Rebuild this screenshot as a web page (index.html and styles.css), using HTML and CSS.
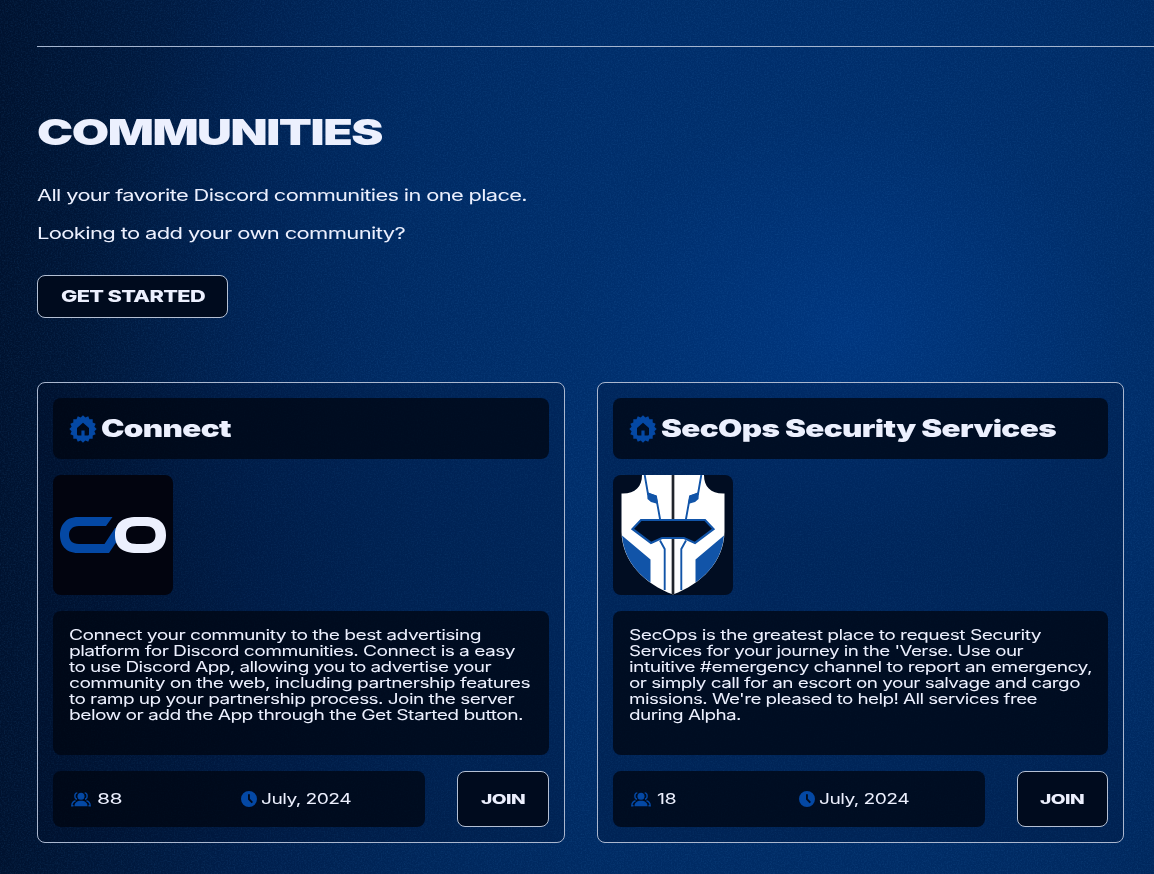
FILE: index.html
```html
<!DOCTYPE html>
<html lang="en">
<head>
<meta charset="utf-8">
<title>Communities</title>
<link rel="stylesheet" href="styles.css">
</head>
<body>
<svg class="defs" width="0" height="0" aria-hidden="true">
  <symbol id="home-badge" viewBox="0 0 28 28">
    <path fill-rule="evenodd" d="M14 .3 16.300 2.600 19.240 1.340 20.500 4.300 23.690 4.310 23.700 7.500 26.660 8.760 25.400 11.700 27.700 14 25.400 16.300 26.660 19.240 23.700 20.500 23.690 23.690 20.500 23.700 19.240 26.660 16.300 25.400 14 27.700 11.700 25.400 8.760 26.660 7.500 23.700 4.310 23.690 4.300 20.500 1.340 19.240 2.600 16.300 .3 14 2.600 11.700 1.340 8.760 4.300 7.500 4.310 4.310 7.500 4.300 8.760 1.340 11.700 2.600ZM14 7.700 8 13V19.300Q8 20.500 9.200 20.500H12.400V15.500H15.600V20.500H18.800Q20 20.500 20 19.300V13Z"/>
  </symbol>
  <symbol id="people" viewBox="0 0 20 15">
    <circle cx="10" cy="4.300" r="3.500"/>
    <path d="M3.500 14.300C3.500 10.500 6 8.700 10 8.700S16.500 10.500 16.500 14.300Z"/>
    <path d="M6.300 .9C3.200 1 3 6.600 6 7.300M13.700 .9C16.800 1 17 6.600 14 7.300M4.500 8.700C1.900 9.300 .9 11.300 .8 13.700H2.500M15.500 8.700C18.100 9.300 19.100 11.300 19.200 13.700H17.500" fill="none" stroke="currentColor" stroke-width="1.400"/>
  </symbol>
  <symbol id="clock" viewBox="0 0 16 16">
    <path fill-rule="evenodd" d="M8 0A8 8 0 1 1 8 16A8 8 0 0 1 8 0ZM7 3.200V8.400L10.600 12.200 12 10.900 8.900 7.700V3.200Z"/>
  </symbol>
</svg>
<svg class="grain" aria-hidden="true">
  <filter id="grain" x="0" y="0" width="100%" height="100%"><feTurbulence type="fractalNoise" baseFrequency=".7" numOctaves="2" seed="4"/><feColorMatrix values="0 0 0 0 .05  0 0 0 0 .3  0 0 0 0 .7  1.5 0 0 0 -.62"/></filter>
  <rect width="100%" height="100%" filter="url(#grain)"/>
</svg>
<main class="page">
  <hr class="rule">
  <h1 class="title"><span class="wide" data-w="345">COMMUNITIES</span></h1>
  <p class="lead"><span class="wide" data-w="490">All your favorite Discord communities in one place.</span></p>
  <p class="lead"><span class="wide" data-w="368">Looking to add your own community?</span></p>
  <button class="start"><span class="wide" data-w="144">GET STARTED</span></button>
  <section class="cards">
    <article class="card">
      <h2 class="name"><svg class="badge"><use href="#home-badge"/></svg><span class="wide" data-w="130">Connect</span></h2>
      <svg class="logo" viewBox="0 0 120 120">
        <rect width="120" height="120" fill="#02040f"/>
        <path fill="#0448a4" d="M59.500 42H25C12 42 7 51 7 60S12 78 25 78H56L66 63V53H62L51.500 69H26C19 69 16 65 16 60S19 51 26 51H53Z"/>
        <path fill="#ecf0fe" fill-rule="evenodd" d="M84 42H92C107 42 113 49 113 60S107 78 92 78H84C68 78 62 71 62 60S68 42 84 42ZM84 51C76 51 73 54 73 60S76 69 84 69H92C99 69 102.500 66 102.500 60S99 51 92 51Z"/>
      </svg>
      <div class="about">
        <span class="wide" data-w="412">Connect your community to the best advertising</span>
        <span class="wide" data-w="446">platform for Discord communities. Connect is a easy</span>
        <span class="wide" data-w="422">to use Discord App, allowing you to advertise your</span>
        <span class="wide" data-w="461">community on the web, including partnership features</span>
        <span class="wide" data-w="445">to ramp up your partnership process. Join the server</span>
        <span class="wide" data-w="454">below or add the App through the Get Started button.</span>
      </div>
      <footer class="foot">
        <div class="facts">
          <div class="fact members"><svg class="people"><use href="#people"/></svg><span class="wide" data-w="25">88</span></div>
          <div class="fact"><svg class="clock"><use href="#clock"/></svg><span class="wide" data-w="90">July, 2024</span></div>
        </div>
        <button class="join"><span class="wide" data-w="44">JOIN</span></button>
      </footer>
    </article>
    <article class="card">
      <h2 class="name"><svg class="badge"><use href="#home-badge"/></svg><span class="wide" data-w="395">SecOps Security Services</span></h2>
      <svg class="logo" viewBox="0 0 120 120">
        <rect width="120" height="120" fill="#010d22"/>
        <path fill="#fff" d="M29 0H91C91 12 98 19 111.500 18.500V57C111 87 88 109 60 119.500C32 109 9 87 8.500 57V18.500C22 19 29 12 29 0Z"/>
        <g>
          <path fill="#1154a8" d="M9 60.500 37.500 84.500V107.500C21 96 10.500 80 9 60.500ZM34 17 43.500 20.500 45 29 38 27 34.500 24Z"/>
          <path fill="none" stroke="#1154a8" stroke-width="1.900" d="M31.700 0 35 19 43 21.500 47.200 45M47 65.500 51.700 74V115"/>
        </g>
        <g transform="matrix(-1 0 0 1 120 0)">
          <path fill="#1154a8" d="M9 60.500 37.500 84.500V107.500C21 96 10.500 80 9 60.500ZM34 17 43.500 20.500 45 29 38 27 34.500 24Z"/>
          <path fill="none" stroke="#1154a8" stroke-width="1.900" d="M31.700 0 35 19 43 21.500 47.200 45M47 65.500 51.700 74V115"/>
        </g>
        <path stroke="#20242c" stroke-width="2.700" d="M60 0V44M60 63V119.500"/>
        <path fill="#010d22" stroke="#1154a8" stroke-width="2.200" d="M28 45H92L100.500 54 82 68 71 63H49L38 68 19.500 54Z"/>
      </svg>
      <div class="about">
        <span class="wide" data-w="412">SecOps is the greatest place to request Security</span>
        <span class="wide" data-w="394">Services for your journey in the 'Verse. Use our</span>
        <span class="wide" data-w="463">intuitive #emergency channel to report an emergency,</span>
        <span class="wide" data-w="451">or simply call for an escort on your salvage and cargo</span>
        <span class="wide" data-w="408">missions. We're pleased to help! All services free</span>
        <span class="wide" data-w="112">during Alpha.</span>
      </div>
      <footer class="foot">
        <div class="facts">
          <div class="fact members"><svg class="people"><use href="#people"/></svg><span class="wide" data-w="19">18</span></div>
          <div class="fact"><svg class="clock"><use href="#clock"/></svg><span class="wide" data-w="90">July, 2024</span></div>
        </div>
        <button class="join"><span class="wide" data-w="44">JOIN</span></button>
      </footer>
    </article>
  </section>
</main>
<script src="script.js"></script>
</body>
</html>
```
FILE: styles.css
```css
* { box-sizing: border-box; }
body {
  margin: 0;
  height: 874px;
  overflow: hidden;
  font-family: Inter, "Liberation Sans", sans-serif;
  color: #ecf0fe;
  background:
    radial-gradient(ellipse 780px 620px at 850px 330px, #00367f 0%, rgba(0, 48, 112, .7) 35%, rgba(0, 42, 98, 0) 100%),
    linear-gradient(90deg, #00122f 0, #00183c 120px, #001f4d 260px, #00265a 420px, #002a62 600px, #002b64 900px, #00275c 100%);
}
.defs { position: absolute; }
.grain { position: absolute; inset: 0; width: 100%; height: 100%; opacity: .18; }
.page { position: relative; padding: 46px 30px 0 37px; }
.rule { height: 1px; margin: 0 -30px 0 0; border: 0; background: #a5b5cf; }
.wide { display: block; white-space: nowrap; letter-spacing: -.03em; transform-origin: 0 50%; }
.title { margin: 61px 0 0; height: 48px; font-size: 36px; line-height: 48px; font-weight: 900; }
.lead { margin: 0; height: 38px; font-size: 16.500px; line-height: 38px; font-weight: 400; }
.title + .lead { margin-top: 20px; }
button {
  display: flex; align-items: center; justify-content: center; padding: 0 0 2px;
  font-family: inherit; color: inherit; font-weight: 800;
  background: #000b1e;
  border: 1px solid #b4c0d4; border-radius: 8px;
}
.start { width: 191px; height: 43px; margin-top: 23px; font-size: 16.500px; }
.cards { display: grid; grid-template-columns: 1fr 1fr; gap: 32px; margin-top: 64px; }
.card {
  display: flex; flex-direction: column; gap: 16px; height: 461px; padding: 15px;
  border: 1px solid #aab7cf; border-radius: 8px; background: rgba(0, 8, 32, .22);
}
.name, .about, .facts { background: rgba(0, 5, 16, .75); border-radius: 8px; }
.name {
  display: flex; align-items: center; gap: 4px; height: 61px; margin: 0; padding: 0 16px;
  font-size: 24px; line-height: 30px; font-weight: 900;
}
.name .wide { letter-spacing: -.02em; }
.badge { width: 28px; height: 28px; fill: #0448a4; }
.logo { display: block; width: 120px; height: 120px; border-radius: 8px; }
.about { height: 144px; padding: 16px; font-size: 14.500px; line-height: 16px; font-weight: 400; }
.foot { display: flex; gap: 32px; height: 56px; }
.facts { flex: 1; display: grid; grid-template-columns: 172px 1fr; padding: 0 16px; font-size: 14px; line-height: 20px; font-weight: 400; }
.card + .card .facts { grid-template-columns: 170px 1fr; }
.fact { display: flex; align-items: center; gap: 4px; }
.members { gap: 6px; padding-left: 2px; }
.people { width: 20px; height: 15px; fill: #0448a4; color: #0448a4; }
.clock { width: 16px; height: 16px; fill: #0448a4; }
.join { width: 91.500px; height: 56px; padding-bottom: 1px; font-size: 13.500px; }
```
FILE: script.js
```js
// Extends each line of text horizontally to its display width.
document.querySelectorAll('.wide').forEach(function (el) {
  var range = document.createRange();
  range.selectNodeContents(el);
  var natural = range.getBoundingClientRect().width;
  el.style.width = el.dataset.w + 'px';
  el.style.textAlign = 'left';
  el.style.transform = 'scaleX(' + el.dataset.w / natural + ')';
});
```
